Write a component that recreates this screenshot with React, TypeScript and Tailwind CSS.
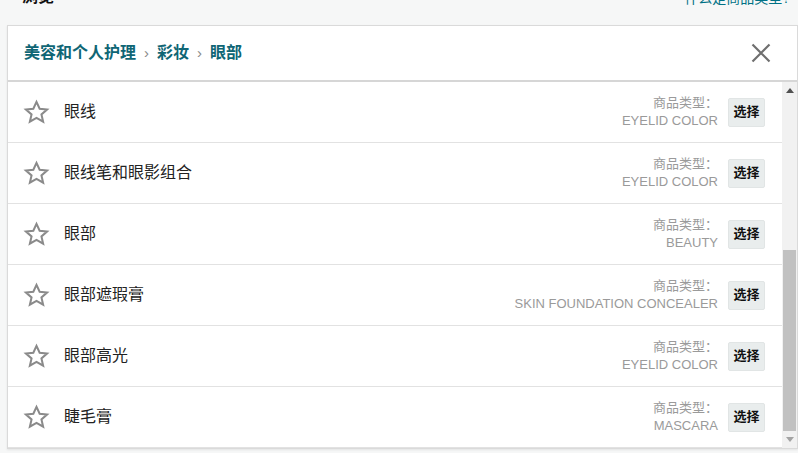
import React, { useLayoutEffect, useRef } from 'react';

interface ItemType {
    name: string;
    type: string;
}

const items: ItemType[] = [
    { name: '假睫毛', type: 'FALSE EYELASH' },
    { name: '眉笔', type: 'EYEBROW COLOR' },
    { name: '眼影', type: 'EYELID COLOR' },
    { name: '眼影底霜', type: 'EYELID COLOR' },
    { name: '眼部卸妆', type: 'BEAUTY' },
    { name: '眼线', type: 'EYELID COLOR' },
    { name: '眼线笔和眼影组合', type: 'EYELID COLOR' },
    { name: '眼部', type: 'BEAUTY' },
    { name: '眼部遮瑕膏', type: 'SKIN FOUNDATION CONCEALER' },
    { name: '眼部高光', type: 'EYELID COLOR' },
    { name: '睫毛膏', type: 'MASCARA' },
];

function StarOutline() {
    return (
        <svg width="27" height="27" viewBox="0 0 24 24" className="shrink-0">
            <path
                d="M12 2.6l2.8 6.1 6.6.6-5 4.4 1.5 6.5L12 16.8l-5.9 3.4 1.5-6.5-5-4.4 6.6-.6z"
                fill="none"
                stroke="#8a8a8a"
                strokeWidth="1.8"
            />
        </svg>
    );
}

function CloseIcon() {
    return (
        <svg width="20" height="20" viewBox="0 0 20 20">
            <path d="M1.5 1.5l17 17M18.5 1.5l-17 17" stroke="#6f6f6f" strokeWidth="2.2" />
        </svg>
    );
}

// drawn scrollbar, the page shows one scrolled to the bottom
function ScrollBar() {
    return (
        <div className="w-[15px] shrink-0 bg-[#f1f1f1] flex flex-col">
            <div className="h-[17px] flex items-center justify-center">
                <svg width="8" height="5" viewBox="0 0 8 5">
                    <path d="M0 5L4 0l4 5z" fill="#505050" />
                </svg>
            </div>
            <div className="flex-1" />
            <div className="h-[181px] mx-[1px] bg-[#c1c1c1]" />
            <div className="h-[17px] flex items-center justify-center">
                <svg width="8" height="5" viewBox="0 0 8 5">
                    <path d="M0 0l4 5 4-5z" fill="#a3a3a3" />
                </svg>
            </div>
        </div>
    );
}

export default function App() {
    const listRef = useRef<HTMLDivElement>(null);

    useLayoutEffect(() => {
        if (listRef.current) {
            listRef.current.scrollTop = listRef.current.scrollHeight;
        }
    }, []);

    return (
        <div
            className="w-[798px] h-[453px] overflow-hidden bg-[#f6f7f7]"
            style={{ fontFamily: '"Liberation Sans", "Noto Sans CJK SC", sans-serif' }}
        >
            <div className="h-[25px] flex justify-between items-start pl-[22px] pr-[8px]">
                <span className="text-[16px] font-bold text-[#111] leading-[20px] -mt-[13px]">浏览</span>
                <span className="text-[14px] text-[#007185] leading-[20px] -mt-[12px]">什么是商品类型?</span>
            </div>

            <div className="ml-[7px] bg-white border border-[#dadada] shadow-[0_1px_2px_rgba(0,0,0,0.08)]">
                <div className="h-[54px] flex items-center justify-between pl-[16px] pr-[26px]">
                    <div className="flex items-center gap-[8px] text-[16px] font-semibold text-[#0f6675]">
                        <span>美容和个人护理</span>
                        <span className="text-[#888] font-normal text-[15px]">›</span>
                        <span>彩妆</span>
                        <span className="text-[#888] font-normal text-[15px]">›</span>
                        <span>眼部</span>
                    </div>
                    <CloseIcon />
                </div>
                <div className="h-[2px] bg-[#d6d6d6]" />

                <div className="h-[366px] flex">
                    <div ref={listRef} className="flex-1 overflow-hidden">
                        {items.map(item => (
                            <div
                                key={item.name}
                                className="h-[61px] border-b border-[#e2e2e2] flex items-center pl-[15px] pr-[17px]"
                            >
                                <StarOutline />
                                <span className="ml-[14px] text-[16px] text-[#222] flex-1">{item.name}</span>
                                <div className="text-right text-[13px] leading-[18px] text-[#9a9a9a] mr-[10px]">
                                    <div>商品类型：</div>
                                    <div>{item.type}</div>
                                </div>
                                <button className="w-[37px] h-[29px] bg-[#e9eded] border border-[#e1e5e5] rounded-[2px] text-[13px] font-bold text-[#111]">
                                    选择
                                </button>
                            </div>
                        ))}
                    </div>
                    <ScrollBar />
                </div>
            </div>
        </div>
    );
}
